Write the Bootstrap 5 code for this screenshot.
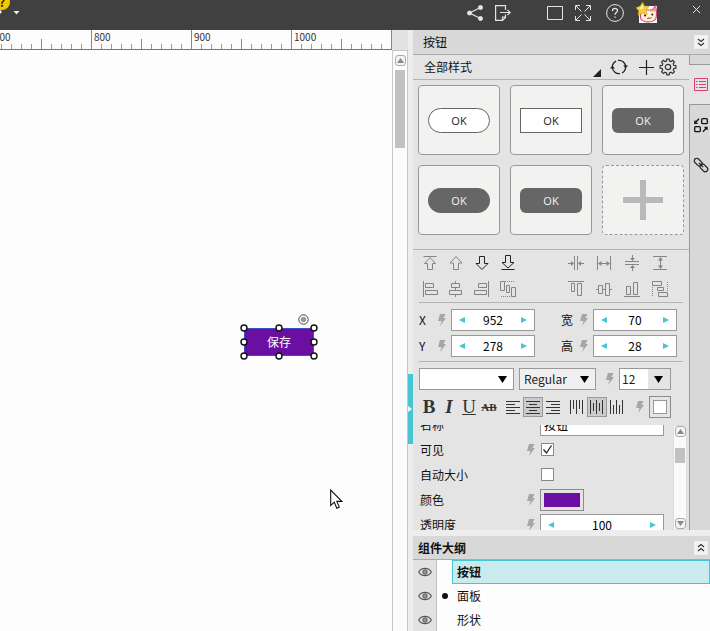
<!DOCTYPE html>
<html lang="zh-CN">
<head>
<meta charset="utf-8">
<meta name="viewport" content="width=device-width, initial-scale=1">
<title>按钮</title>
<link href="https://cdn.jsdelivr.net/npm/bootstrap@5.3.0/dist/css/bootstrap.min.css" rel="stylesheet">
<style>
body{font-family:"Noto Sans CJK SC",sans-serif;font-size:12px;line-height:16px;color:#111;background:#fdfdfd}
button{color:inherit}
svg{display:block;flex:none}
.topbar{height:30px;background:#404040;color:#e4e4e4}
.tool{border:0;padding:0;background:none;width:28px;height:26px;display:flex;align-items:center;justify-content:center;flex:none}
.tool-wide{width:36px}
.gap-mid{margin-left:24px}
.gap-end{margin-left:21px}
.help-dot{width:16px;height:16px;border-radius:50%;background:#f5c800;color:#222;font-size:12px;line-height:16px;left:-6px;top:-6px}
.ruler{height:20px;border-bottom:1px solid #777}
.segments{margin-left:-9px;height:19px;
 background:repeating-linear-gradient(90deg,#888 0 1px,transparent 1px 100px) 0 0/100% 19px no-repeat,repeating-linear-gradient(90deg,transparent 0 50px,#888 50px 51px,transparent 51px 100px) 0 100%/100% 10px no-repeat,repeating-linear-gradient(90deg,#999 0 1px,transparent 1px 10px) 0 100%/100% 5px no-repeat}
.seg{width:100px;padding-left:3px;font-size:10px;line-height:14px;color:#333;flex:none}
.vscroll{width:16px;border:1px solid #c8c8c8;border-width:1px 1px 0;background:#fcfcfc}
.corner{height:20px;background:#e2e2e2}
.step{width:11px;height:11px;border:1px solid #aaa;border-radius:3px;background:#f4f4f4;padding:0;display:flex;align-items:center;justify-content:center;color:#888}
.thumb{width:10px;background:#c1c1c1}
.thumb-long{height:78px}
.thumb-short{height:15px}
.gutter{width:5px;background:#ededed}
.gutter button{width:5px;height:70px;margin-top:344px;border:0;padding:0;background:#46c5d3;color:#fff}
.inspector{width:297px;background:#e4e4e4}
.canvas-item{left:244px;top:278px;width:70px}
.canvas-item button{height:28px;background:#6a0fa1;border:1px solid #3c50c8;color:#fff;font-size:12px}
.handles{left:-5px;top:-14px}
.pointer{left:330px;top:439px}
.head{height:25px;background:#d8d8d8;border-bottom:1px solid #aaa;padding:0 2px 0 10px}
.fold{width:14px;height:14px;border:1px solid #eee;background:#f2f2f2;padding:0;display:flex;align-items:center;justify-content:center;color:#333}
.stylebar{height:25px;border-bottom:1px solid #b4b4b4;padding:0 12px 0 11px}
.tool-plus{width:18px}
.presets{display:grid;grid-template-columns:repeat(3,1fr);gap:10px;padding:5px 5px 14px}
.preset{height:70px;border:1px solid #999;border-radius:4px;background:#f2f2f1;padding:0;display:flex;align-items:center;justify-content:center}
.preset span{width:62px;height:25px;line-height:25px;border-radius:6px;background:#666;color:#f4f4f4;font-size:11px;font-family:"Open Sans",sans-serif}
.preset .lite{background:#fff;color:#222;border:1px solid #666;line-height:23px}
.preset .pill{border-radius:13px}
.preset .sharp{border-radius:0}
.preset.dashed{border-style:dashed;color:#b9b9b9}
.side{width:21px;background:#d8d8d8}
.side-a{height:10px;border-left:1px solid #999;border-bottom:1px solid #999}
.side-b{height:39px;background:#e4e4e4;padding-left:3px}
.side-c{border-left:1px solid #999;border-top:1px solid #999;padding:6px 0 0 2px}
.side .tool{width:100%;height:28px}
.side-c .tool+.tool{margin-top:12px}
.arrange{border-top:1px solid #b4b4b4;padding-left:4px}
.gray{color:#858585}
.narrow .tool{width:26px}
.far{margin-left:41px}
.rule{height:1px;background:#b4b4b4;margin:0 6px}
.fields{padding:6px 12px 4px 6px}
.fields>div+div{margin-top:4px}
.lab{width:19px}
.bolt{width:13px;color:#a6a6a6;display:flex}
.spin{width:84px;height:22px;border:1px solid #999;background:#fff;padding:0 6px}
.spin input{min-width:0;width:100%;border:0;padding:0;text-align:center;background:none;line-height:18px}
.spin button{border:0;padding:0;width:8px;background:none;color:#46c5d3;flex:none;display:flex;justify-content:center}
.wide{width:124px}
.textrow{height:22px;padding:0 18px 0 6px}
.sel{appearance:none;height:22px;border:1px solid #999;border-radius:0;padding:0 16px 0 4px;line-height:20px;color:#222;
 background:#fff url("data:image/svg+xml,%3Csvg xmlns='http://www.w3.org/2000/svg' width='9' height='7'%3E%3Cpath d='M0 0h9L4.5 7z'/%3E%3C/svg%3E") right 6px center no-repeat}
.sel-font{width:95px}
.sel-face{width:77px;background-color:#f0f0f0}
.sel-size{width:52px;padding-left:2px;background-image:url("data:image/svg+xml,%3Csvg xmlns='http://www.w3.org/2000/svg' width='9' height='7'%3E%3Cpath d='M0 0h9L4.5 7z'/%3E%3C/svg%3E"),linear-gradient(#e4e4e4,#e4e4e4);background-size:9px 7px,22px 20px;background-position:right 7px center,right 0 center}
.fmt{border:0;padding:0;background:none;width:20px;height:20px;display:flex;align-items:center;justify-content:center;font-family:"Liberation Serif",serif;font-size:19px;line-height:20px;color:#333;flex:none}
.fmt.on{border:1px solid #999;background:#cbcbcb}
.fmt.ab{font-size:11px;font-weight:700}
.swatch{height:22px;border:1px solid #8c8c8c;background:#e4e4e4;padding:3px}
.swatch-s{width:22px}
.swatch-s span{border:1px solid #999;background:#fff}
.swatch-l{width:44px}
.swatch-l span{background:#6a0fa1}
.props{margin-top:7px;height:105px;overflow:hidden}
.rows{margin-top:-13px;padding-left:7px}
.prow{height:25px}
.pname{width:107px}
.name-in{height:22px;border:1px solid #999;border-radius:0;padding:0 3px;line-height:20px;background:#fff}
.tick{appearance:none;width:13px;height:13px;border:1px solid #888;background:#fff;margin:0 0 0 1px}
.tick:checked{background:#fff url("data:image/svg+xml,%3Csvg xmlns='http://www.w3.org/2000/svg' width='11' height='11'%3E%3Cpath d='M1.500 5.500l3 3.500L9.500 1.500' fill='none' stroke='%23222' stroke-width='1.300'/%3E%3C/svg%3E") center no-repeat}
.pscroll{width:14px;margin-right:2px;background:#fafafa;border:1px solid #ddd}
.pscroll .thumb{margin:11px 0 auto}
.outline{border-top:6px solid #ededed}
.outline .head{height:24px;padding-left:5px}
.orow{height:24px}
.eye{width:24px;height:24px;background:#e2e2e2;border:0;border-right:1px solid #c0c0c0;padding:0;display:flex;align-items:center;justify-content:center;color:#555}
.dotcol{width:15px;background:#fdfdfd}
.dotcol i{width:6px;height:6px;border-radius:50%;background:#111}
.node{background:#fdfdfd;border:1px solid #fdfdfd;padding:0 4px;text-align:left}
.node.picked{background:#c9ebee;border-color:#46c5d3;font-weight:700}
</style>
<script src="https://cdn.jsdelivr.net/npm/bootstrap@5.3.0/dist/js/bootstrap.bundle.min.js"></script>
</head>
<body class="vh-100 overflow-hidden d-flex flex-column">
<svg width="0" height="0" class="position-absolute" aria-hidden="true">
 <symbol id="bolt" viewBox="0 0 8 12"><path d="M2 0h5.500L5.500 4H8L2 12l1.500-5H0z" fill="currentColor"/></symbol>
 <symbol id="lt" viewBox="0 0 6 6"><path d="M6 0v6L0 3z" fill="currentColor"/></symbol>
 <symbol id="gt" viewBox="0 0 6 6"><path d="M0 0v6l6-3z" fill="currentColor"/></symbol>
 <symbol id="eye" viewBox="0 0 14 10"><path d="M.7 5C3.500.2 10.500.2 13.300 5 10.500 9.800 3.500 9.800.7 5z" fill="none" stroke="currentColor" stroke-width="1.200"/><circle cx="7" cy="5" r="2.200" fill="#999" stroke="currentColor"/></symbol>
</svg>

<header class="topbar d-flex position-relative flex-shrink-0 overflow-hidden">
 <span class="help-dot position-absolute text-center fw-bold">?</span>
 <svg width="22" height="20" viewBox="0 0 22 20" fill="#eee"><path d="M0 9.500l2 2.500-2 2zM13.500 11h6l-3 3.500z"/></svg>
 <div class="d-flex ms-auto">
  <button class="tool" aria-label="分享"><svg width="16" height="16" viewBox="0 0 16 16" fill="currentColor" stroke="currentColor"><path d="M13.500 2.500L2.500 8l11 5.500" fill="none" stroke-width="1.200"/><circle cx="13.500" cy="2.500" r="2"/><circle cx="2.500" cy="8" r="2"/><circle cx="13.500" cy="13.500" r="2"/></svg></button>
  <button class="tool" aria-label="导出"><svg width="16" height="16" viewBox="0 0 16 16" fill="none" stroke="currentColor" stroke-width="1.200"><path d="M10.500 5V.6H.6v14.800h6.900l3-3V9.500M7.500 15v-3h3M5 7.500h10M12.500 5l2.700 2.500-2.700 2.500"/></svg></button>
  <button class="tool gap-mid" aria-label="窗口"><svg width="16" height="14" viewBox="0 0 16 14" fill="none" stroke="currentColor"><path d="M.5.500h15v13H.5z"/></svg></button>
  <button class="tool" aria-label="全屏"><svg width="16" height="16" viewBox="0 0 16 16" fill="none" stroke="currentColor"><path d="M.5 5V.5H5M11 .5h4.500V5M15.500 11v4.500H11M5 15.500H.5V11M1 1l5.500 5.500M15 1L9.500 6.500M1 15l5.500-5.500M15 15L9.500 9.500"/></svg></button>
  <button class="tool tool-wide" aria-label="帮助"><svg width="18" height="18" viewBox="0 0 18 18" fill="none" stroke="currentColor"><circle cx="9" cy="9" r="8.400"/><path d="M6.500 7c0-3.500 5-3.300 5-.4 0 1.900-2.500 2-2.500 4.200M9 12.500v1.300" stroke-width="1.300"/></svg></button>
  <button class="tool" aria-label="头像"><svg width="22" height="22" viewBox="0 0 22 22"><path d="M3 4h18v17H3z" fill="#fff"/><path d="M5 17c-1-3-.5-6 1-8l3-1 7 0 3.500-4c1 4 1.500 9 .3 13-2.800 3.500-12 4-14.800 0z" fill="#fff3d6" stroke="#d8447e" stroke-width="1.200"/><path d="M15.500 8l4-4 .3 5z" fill="#ef8fb0"/><circle cx="9" cy="13.500" r="1.100" fill="#3a2320"/><circle cx="16.300" cy="12.500" r="1.100" fill="#3a2320"/><path d="M11 16c1 1.500 2 .5 2-.5.5 1.500 2 1 2.500 0" fill="none" stroke="#b02850"/><path d="M14 9.500c2-1.500 4-1 4.500 0" stroke="#e98b30" fill="none"/><path d="M6.500 0l2 4 4.500.5-3 3.500 1 5-4.500-2L2 13.500l.5-5L-.5 5.500 4 4.500z" fill="#f3cd3a" stroke="#b98e14" stroke-width=".5"/><path d="M6.500 2l1 3.500-2 2L3 6l2-1z" fill="#fff3a0"/></svg></button>
  <button class="tool gap-end align-self-start" aria-label="关闭"><svg class="mb-2" width="9" height="9" viewBox="0 0 10 10" stroke="currentColor" stroke-width="1.100"><path d="M1 1l8 8M9 1L1 9"/></svg></button>
 </div>
</header>

<main class="d-flex flex-fill overflow-hidden">
 <section class="flex-fill overflow-hidden position-relative">
  <div class="ruler overflow-hidden"><div class="segments d-flex"><span class="seg">700</span><span class="seg">800</span><span class="seg">900</span><span class="seg">1000</span></div></div>
  <div class="canvas-item position-absolute mt-3 pt-1">
   <div class="position-relative">
    <button class="w-100 p-0 d-block">保存</button>
    <svg class="handles position-absolute" width="80" height="47" viewBox="0 0 80 47" fill="#fff" stroke="#111" stroke-width="1.400"><circle cx="5" cy="14" r="3"/><circle cx="40" cy="14" r="3"/><circle cx="75" cy="14" r="3"/><circle cx="5" cy="28" r="3"/><circle cx="75" cy="28" r="3"/><circle cx="5" cy="42" r="3"/><circle cx="40" cy="42" r="3"/><circle cx="75" cy="42" r="3"/><circle cx="64.500" cy="5.500" r="4.700" stroke="#444" stroke-width="1"/><circle cx="64.500" cy="5.500" r="2.700" fill="#999" stroke="none"/></svg>
   </div>
  </div>
  <svg class="pointer position-absolute mt-3 pt-1" width="13" height="25" viewBox="0 0 13 21"><path d="M.7 1v15.500l3.600-3.300 2.500 6 2.500-1.100-2.500-5.700h5z" fill="#fff" stroke="#111" stroke-width="1.100"/></svg>
 </section>

 <div class="d-flex flex-column flex-shrink-0">
  <div class="corner"></div>
  <div class="vscroll flex-fill d-flex flex-column align-items-center">
   <button class="step mt-1 mb-1" aria-label="向上滚动"><svg width="7" height="5" viewBox="0 0 7 5"><path d="M0 5h7L3.500 0z" fill="currentColor"/></svg></button>
   <div class="thumb thumb-long"></div>
  </div>
 </div>
 <div class="gutter flex-shrink-0"><button class="d-flex align-items-center" aria-label="折叠面板"><svg width="4" height="6" viewBox="0 0 4 6"><path d="M0 0v6l4-3z" fill="currentColor"/></svg></button></div>

 <aside class="inspector flex-shrink-0 d-flex flex-column">
  <div class="head d-flex align-items-center justify-content-between flex-shrink-0">按钮
   <button class="fold" aria-label="收起"><svg width="8" height="9" viewBox="0 0 8 9" fill="none" stroke="currentColor" stroke-width="1.200"><path d="M1 1l3 2.500L7 1M1 5l3 2.500L7 5"/></svg></button>
  </div>
  <div class="d-flex flex-shrink-0">
   <div class="flex-fill">
    <div class="stylebar d-flex align-items-center"><span class="me-auto">全部样式</span>
     <svg class="align-self-end" width="8" height="10" viewBox="0 0 8 10"><path d="M8 0v8H0z" fill="#222"/></svg>
     <button class="tool tool-wide" aria-label="刷新"><svg width="18" height="18" viewBox="0 0 18 18" fill="none" stroke="#222" stroke-width="1.300"><path d="M2.400 9A6.600 6.600 0 0 1 6 3.100M8 2.400a6.600 6.600 0 0 1 7.600 6.100M15.600 10A6.600 6.600 0 0 1 12 14.900M10 15.600A6.600 6.600 0 0 1 2.400 9.500"/><path d="M0 10.500h4.800L2.400 7.500zM13.200 7.500H18l-2.400 3z" fill="#222" stroke="none"/></svg></button>
     <button class="tool tool-plus flex-shrink-0" aria-label="添加"><svg width="15" height="15" viewBox="0 0 15 15" stroke="#222" stroke-width="1.200"><path d="M7.500 0v15M0 7.500h15"/></svg></button>
     <button class="tool w-auto ps-1" aria-label="设置"><svg width="18" height="18" viewBox="0 0 18 18" fill="none" stroke="#333" stroke-width="1.200"><circle cx="9" cy="9" r="2.700"/><path d="M7.500 3L7.800 1h2.400l.3 2 1.500.6 1.700-1.200 1.700 1.700-1.200 1.700.7 1.600 2 .3v2.500l-2 .3-.7 1.500 1.200 1.700-1.700 1.700-1.700-1.200-1.500.7-.3 2H7.800l-.3-2-1.600-.7-1.600 1.200-1.700-1.700 1.200-1.700-.7-1.500-2-.3V7.700l2-.3.7-1.600-1.200-1.700 1.700-1.700 1.600 1.200z"/></svg></button>
    </div>
    <div class="presets">
     <button class="preset"><span class="lite pill">OK</span></button>
     <button class="preset"><span class="lite sharp">OK</span></button>
     <button class="preset"><span>OK</span></button>
     <button class="preset"><span class="pill">OK</span></button>
     <button class="preset"><span>OK</span></button>
     <button class="preset dashed" aria-label="新增样式"><svg width="40" height="40" viewBox="0 0 40 40" stroke="currentColor" stroke-width="6"><path d="M20 0v40M0 20h40"/></svg></button>
    </div>
    <div class="arrange gray">
     <div class="d-flex">
      <div class="d-flex narrow">
       <button class="tool" aria-label="置顶"><svg width="16" height="16" viewBox="0 0 16 16" fill="none" stroke="currentColor"><path d="M1.500 1.500h13M8 2.500L2.500 8.500h3v6h5v-6h3z"/></svg></button>
       <button class="tool" aria-label="上移"><svg width="16" height="16" viewBox="0 0 16 16" fill="none" stroke="currentColor"><path d="M8 1.500L2 8h3.500v6.500h5V8H14z"/></svg></button>
       <button class="tool text-dark" aria-label="下移"><svg width="16" height="16" viewBox="0 0 16 16" fill="none" stroke="currentColor"><path d="M8 14.500L2 8.500h3.500v-7h5v7H14z"/></svg></button>
       <button class="tool text-dark" aria-label="置底"><svg width="16" height="16" viewBox="0 0 16 16" fill="none" stroke="currentColor"><path d="M1.500 14.500h13M8 13L2 7.500h3.500v-7h5v7H14z"/></svg></button>
      </div>
      <div class="d-flex far">
       <button class="tool" aria-label="水平靠拢"><svg width="16" height="16" viewBox="0 0 16 16" fill="none" stroke="currentColor"><path d="M6.500 1v14M9.500 1v14M0 8.500h5M11 8.500h5"/><path d="M3 6v5l3-2.500zM13 6v5l-3-2.500z" fill="currentColor" stroke="none"/></svg></button>
       <button class="tool" aria-label="水平间距"><svg width="16" height="16" viewBox="0 0 16 16" fill="none" stroke="currentColor"><path d="M1.500 1v14M14.500 1v14M3 8.500h10"/><path d="M5.500 6v5l-3.500-2.500zM10.500 6v5L14 8.500z" fill="currentColor" stroke="none"/></svg></button>
       <button class="tool" aria-label="垂直靠拢"><svg width="16" height="16" viewBox="0 0 16 16" fill="none" stroke="currentColor"><path d="M1 6.500h14M1 9.500h14M8.500 0v5M8.500 11v5"/><path d="M6 3h5L8.500 6zM6 13h5l-2.500-3z" fill="currentColor" stroke="none"/></svg></button>
       <button class="tool" aria-label="垂直间距"><svg width="16" height="16" viewBox="0 0 16 16" fill="none" stroke="currentColor"><path d="M1 1.500h14M1 14.500h14M8.500 3v10"/><path d="M6 5.500h5L8.500 2zM6 10.500h5L8.500 14z" fill="currentColor" stroke="none"/></svg></button>
      </div>
     </div>
     <div class="d-flex">
      <div class="d-flex narrow">
       <button class="tool" aria-label="左对齐"><svg width="16" height="16" viewBox="0 0 16 16" fill="none" stroke="currentColor"><path d="M1.500 0v16M3.500 2.500h8v4h-8zM3.500 9.500h12v4h-12z"/></svg></button>
       <button class="tool" aria-label="水平居中"><svg width="16" height="16" viewBox="0 0 16 16" fill="none" stroke="currentColor"><path d="M3.500 2.500h8v4h-8zM1.500 9.500h12v4h-12zM7.500 0v2M7.500 7v2M7.500 14v2"/></svg></button>
       <button class="tool" aria-label="右对齐"><svg width="16" height="16" viewBox="0 0 16 16" fill="none" stroke="currentColor"><path d="M14.500 0v16M4.500 2.500h8v4h-8zM.5 9.500h12v4H.5z"/></svg></button>
       <button class="tool" aria-label="水平分布"><svg width="18" height="16" viewBox="0 0 18 16" fill="none" stroke="currentColor"><path d="M1.500.5h4v9h-4zM7.500 4.500h3v7h-3zM12.500 6.500h4v9h-4z"/><path d="M6 .5h10M2 15.500h10" stroke-dasharray="1 1"/></svg></button>
      </div>
      <div class="d-flex far">
       <button class="tool" aria-label="顶对齐"><svg width="16" height="16" viewBox="0 0 16 16" fill="none" stroke="currentColor"><path d="M0 .5h16M3.500 2.500h3v8h-3zM9.500 2.500h4v12h-4z"/></svg></button>
       <button class="tool" aria-label="垂直居中"><svg width="16" height="16" viewBox="0 0 16 16" fill="none" stroke="currentColor"><path d="M2.500 4.500h4v8h-4zM9.500 2.500h4v12h-4zM0 8.500h2M7 8.500h2M14 8.500h2"/></svg></button>
       <button class="tool" aria-label="底对齐"><svg width="16" height="16" viewBox="0 0 16 16" fill="none" stroke="currentColor"><path d="M0 15.500h16M2.500 5.500h4v8h-4zM9.500 1.500h4v12h-4z"/></svg></button>
       <button class="tool" aria-label="垂直分布"><svg width="16" height="16" viewBox="0 0 16 16" fill="none" stroke="currentColor"><path d="M.5.5h9v4h-9zM5.500 6.500h6v3h-6zM6.500 11.500h9v4h-9z"/><path d="M.5 6v10M15.500 1v10" stroke-dasharray="1 1"/></svg></button>
      </div>
     </div>
    </div>
    <div class="rule"></div>
    <div class="fields">
     <div class="d-flex align-items-center">
      <label class="lab" for="fx">X</label><span class="bolt"><svg width="8" height="12"><use href="#bolt"/></svg></span>
      <div class="spin d-flex align-items-center"><button aria-label="减少"><svg width="6" height="6"><use href="#lt"/></svg></button><input id="fx" value="952"><button aria-label="增加"><svg width="6" height="6"><use href="#gt"/></svg></button></div>
      <label class="lab ms-auto" for="fw">宽</label><span class="bolt"><svg width="8" height="12"><use href="#bolt"/></svg></span>
      <div class="spin d-flex align-items-center"><button aria-label="减少"><svg width="6" height="6"><use href="#lt"/></svg></button><input id="fw" value="70"><button aria-label="增加"><svg width="6" height="6"><use href="#gt"/></svg></button></div>
     </div>
     <div class="d-flex align-items-center">
      <label class="lab" for="fy">Y</label><span class="bolt"><svg width="8" height="12"><use href="#bolt"/></svg></span>
      <div class="spin d-flex align-items-center"><button aria-label="减少"><svg width="6" height="6"><use href="#lt"/></svg></button><input id="fy" value="278"><button aria-label="增加"><svg width="6" height="6"><use href="#gt"/></svg></button></div>
      <label class="lab ms-auto" for="fh">高</label><span class="bolt"><svg width="8" height="12"><use href="#bolt"/></svg></span>
      <div class="spin d-flex align-items-center"><button aria-label="减少"><svg width="6" height="6"><use href="#lt"/></svg></button><input id="fh" value="28"><button aria-label="增加"><svg width="6" height="6"><use href="#gt"/></svg></button></div>
     </div>
    </div>
    <div class="rule mb-1"></div>
    <div class="textrow d-flex align-items-center justify-content-between mt-1 pt-1">
     <select class="sel sel-font" aria-label="字体"><option></option></select>
     <select class="sel sel-face" aria-label="字形"><option>Regular</option></select>
     <span class="bolt justify-content-end"><svg width="8" height="12"><use href="#bolt"/></svg></span>
     <select class="sel sel-size" aria-label="字号"><option>12</option></select>
    </div>
    <div class="textrow d-flex align-items-center mt-2">
     <button class="fmt fw-bold" aria-label="加粗">B</button>
     <button class="fmt fst-italic fw-bold" aria-label="斜体">I</button>
     <button class="fmt text-decoration-underline" aria-label="下划线">U</button>
     <button class="fmt ab text-decoration-line-through" aria-label="删除线">AB</button>
     <span class="d-flex ms-1">
     <button class="fmt" aria-label="文本左对齐"><svg width="14" height="14" viewBox="0 0 14 14" stroke="#333"><path d="M0 1.500h14M0 4.500h9M0 7.500h14M0 10.500h9M0 13.500h14"/></svg></button>
     <button class="fmt on" aria-label="文本居中"><svg width="14" height="14" viewBox="0 0 14 14" stroke="#333"><path d="M0 1.500h14M3 4.500h8M0 7.500h14M3 10.500h8M0 13.500h14"/></svg></button>
     <button class="fmt" aria-label="文本右对齐"><svg width="14" height="14" viewBox="0 0 14 14" stroke="#333"><path d="M0 1.500h14M5 4.500h9M0 7.500h14M5 10.500h9M0 13.500h14"/></svg></button>
     </span>
     <span class="d-flex ms-1">
     <button class="fmt" aria-label="文本靠上"><svg width="14" height="14" viewBox="0 0 14 14" stroke="#333"><path d="M.5 0v14M3.500 0v9M6.500 0v14M9.500 0v9M12.500 0v14"/></svg></button>
     <button class="fmt on" aria-label="文本垂直居中"><svg width="14" height="14" viewBox="0 0 14 14" stroke="#333"><path d="M.5 0v14M3.500 3v8M6.500 0v14M9.500 3v8M12.500 0v14"/></svg></button>
     <button class="fmt" aria-label="文本靠下"><svg width="14" height="14" viewBox="0 0 14 14" stroke="#333"><path d="M.5 0v14M3.500 5v9M6.500 0v14M9.500 5v9M12.500 0v14"/></svg></button>
     </span>
     <span class="bolt ms-auto"><svg width="8" height="12"><use href="#bolt"/></svg></span>
     <button class="swatch swatch-s d-flex" aria-label="文字颜色"><span class="flex-fill align-self-stretch"></span></button>
    </div>
    <div class="props d-flex">
     <div class="rows flex-fill">
      <div class="prow d-flex align-items-center"><label class="pname" for="pn">名称</label><span class="bolt"></span><input class="name-in wide" id="pn" value="按钮"></div>
      <div class="prow d-flex align-items-center"><label class="pname" for="pv">可见</label><span class="bolt"><svg width="8" height="12"><use href="#bolt"/></svg></span><input type="checkbox" class="tick" id="pv" checked></div>
      <div class="prow d-flex align-items-center"><label class="pname" for="pa">自动大小</label><span class="bolt"></span><input type="checkbox" class="tick" id="pa"></div>
      <div class="prow d-flex align-items-center"><label class="pname" for="pc">颜色</label><span class="bolt"><svg width="8" height="12"><use href="#bolt"/></svg></span><button class="swatch swatch-l d-flex" id="pc"><span class="flex-fill align-self-stretch"></span></button></div>
      <div class="prow d-flex align-items-center"><label class="pname" for="po">透明度</label><span class="bolt"><svg width="8" height="12"><use href="#bolt"/></svg></span><div class="spin wide d-flex align-items-center"><button aria-label="减少"><svg width="6" height="6"><use href="#lt"/></svg></button><input id="po" value="100"><button aria-label="增加"><svg width="6" height="6"><use href="#gt"/></svg></button></div></div>
     </div>
     <div class="pscroll d-flex flex-column align-items-center">
      <button class="step" aria-label="向上滚动"><svg width="7" height="5" viewBox="0 0 7 5"><path d="M0 5h7L3.500 0z" fill="currentColor"/></svg></button>
      <div class="thumb thumb-short"></div>
      <button class="step" aria-label="向下滚动"><svg width="7" height="5" viewBox="0 0 7 5"><path d="M0 0h7L3.500 5z" fill="currentColor"/></svg></button>
     </div>
    </div>
   </div>
   <div class="side d-flex flex-column flex-shrink-0">
    <div class="side-a"></div>
    <div class="side-b d-flex align-items-center"><button class="tool" aria-label="属性"><svg width="14" height="13" viewBox="0 0 14 13" fill="none" stroke="#dc3f6e"><path d="M.5.500h13v12H.5zM2 3.500h1.500M5 3.500h7M2 6.500h1.500M5 6.500h7M2 9.500h1.500M5 9.500h7"/></svg></button></div>
    <div class="side-c flex-fill">
     <button class="tool" aria-label="交互"><svg width="14" height="15" viewBox="0 0 14 15" fill="none" stroke="#111" stroke-width="1.300"><rect x="7.700" y=".7" width="5.600" height="5" rx="1"/><rect x=".7" y="8.700" width="5.600" height="5" rx="1"/><path d="M5 .7L1.500 4.500M.8 2.500v2.800h2.800M9 13.700L12.500 9.700M10.500 9.300h2.500v2.800"/></svg></button>
     <button class="tool" aria-label="链接"><svg width="16" height="16" viewBox="0 0 16 16" fill="none" stroke="#222" stroke-width="1.200"><g transform="rotate(45 8 8)"><rect x="-.5" y="5.500" width="9" height="5" rx="2.500"/><rect x="7.500" y="5.500" width="9" height="5" rx="2.500"/><path d="M5 8h6"/></g></svg></button>
    </div>
   </div>
  </div>
  <div class="outline flex-fill overflow-hidden">
   <div class="head d-flex align-items-center justify-content-between fw-bold">组件大纲
    <button class="fold" aria-label="展开"><svg width="8" height="9" viewBox="0 0 8 9" fill="none" stroke="currentColor" stroke-width="1.200"><path d="M1 4l3-2.500L7 4M1 8l3-2.500L7 8"/></svg></button>
   </div>
   <div class="orow d-flex"><button class="eye" aria-label="显示"><svg width="14" height="10"><use href="#eye"/></svg></button><span class="dotcol"></span><button class="node picked flex-fill">按钮</button></div>
   <div class="orow d-flex"><button class="eye" aria-label="显示"><svg width="14" height="10"><use href="#eye"/></svg></button><span class="dotcol d-flex align-items-center justify-content-center"><i></i></span><button class="node flex-fill">面板</button></div>
   <div class="orow d-flex"><button class="eye" aria-label="显示"><svg width="14" height="10"><use href="#eye"/></svg></button><span class="dotcol"></span><button class="node flex-fill">形状</button></div>
  </div>
 </aside>
</main>
</body>
</html>
